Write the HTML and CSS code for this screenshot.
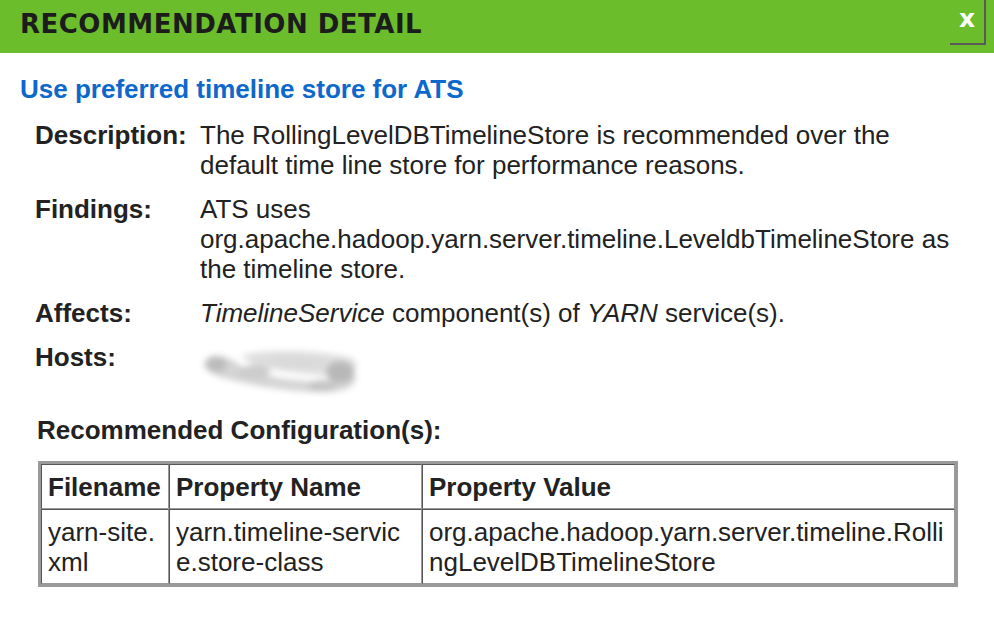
FILE: index.html
```html
<!DOCTYPE html>
<html lang="en">
<head>
<meta charset="utf-8">
<title>Recommendation Detail</title>
<link rel="stylesheet" href="styles.css">
</head>
<body>
<div class="dialog">
  <header class="dialog-header">
    <h1 class="dialog-title">RECOMMENDATION DETAIL</h1>
    <button class="close-btn" type="button" aria-label="Close">x</button>
  </header>
  <main class="dialog-body">
    <h2 class="rec-title">Use preferred timeline store for ATS</h2>
    <dl class="details">
      <dt>Description:</dt>
      <dd>The RollingLevelDBTimelineStore is recommended over the default time line store for performance reasons.</dd>
      <dt>Findings:</dt>
      <dd>ATS uses org.apache.hadoop.yarn.server.timeline.LeveldbTimelineStore as the timeline store.</dd>
      <dt>Affects:</dt>
      <dd><em>TimelineService</em> component(s) of <em>YARN</em> service(s).</dd>
      <dt>Hosts:</dt>
      <dd class="hosts">
        <svg class="blur-blob" width="170" height="56" viewBox="0 0 170 56" aria-hidden="true">
          <defs>
            <filter id="bl" x="-20%" y="-50%" width="140%" height="200%">
              <feGaussianBlur stdDeviation="3.2"/>
            </filter>
          </defs>
          <g filter="url(#bl)">
            <path d="M8 22 C14 12 30 12 42 22 C58 34 92 38 124 40 C142 42 152 38 158 30 C164 42 152 50 130 50 C100 50 70 46 44 40 C26 36 10 32 8 22 Z" fill="#d4d4d4"/>
            <path d="M45 14 C70 6 120 8 156 16 C164 22 160 32 150 34 C120 34 90 30 60 24 Z" fill="#dedede"/>
            <ellipse cx="20" cy="22" rx="11" ry="8" fill="#bcbcbc"/>
            <ellipse cx="144" cy="30" rx="14" ry="11" fill="#b8b8b8"/>
            <ellipse cx="126" cy="44" rx="14" ry="6" fill="#c4c4c4"/>
            <ellipse cx="58" cy="30" rx="16" ry="7" fill="#cccccc"/>
            <ellipse cx="100" cy="20" rx="30" ry="6" fill="#d9d9d9"/>
          </g>
        </svg>
      </dd>
    </dl>
    <h3 class="config-title">Recommended Configuration(s):</h3>
    <table class="config-table">
      <colgroup>
        <col class="c-file">
        <col class="c-name">
        <col class="c-value">
      </colgroup>
      <thead>
        <tr><th>Filename</th><th>Property Name</th><th>Property Value</th></tr>
      </thead>
      <tbody>
        <tr>
          <td>yarn-site.xml</td>
          <td>yarn.timeline-service.store-class</td>
          <td>org.apache.hadoop.yarn.server.timeline.RollingLevelDBTimelineStore</td>
        </tr>
      </tbody>
    </table>
  </main>
</div>
</body>
</html>
```

FILE: styles.css
```css
* { box-sizing: border-box; }

html, body {
  margin: 0;
  padding: 0;
  background: #ffffff;
}

body {
  font-family: "Liberation Sans", Arial, Helvetica, sans-serif;
  font-size: 26px;
  line-height: 30px;
  color: #222222;
}

.dialog-header {
  height: 53px;
  background: #6bbd2c;
  display: flex;
  justify-content: space-between;
  align-items: flex-start;
}

.dialog-title {
  margin: 0;
  padding: 9px 0 0 20px;
  font-family: "DejaVu Sans", Verdana, sans-serif;
  font-weight: bold;
  font-size: 26px;
  line-height: 30px;
  letter-spacing: 0.5px;
  color: #1c1c1c;
}

.close-btn {
  width: 36px;
  height: 45px;
  margin-right: 8px;
  padding: 0 0 6px 0;
  background: transparent;
  border: 0;
  border-right: 2px solid #5a5a5a;
  border-bottom: 2px solid #5a5a5a;
  color: #ffffff;
  font-family: "DejaVu Sans", Verdana, sans-serif;
  font-weight: bold;
  font-size: 25px;
  line-height: 30px;
  cursor: pointer;
}

.dialog-body {
  padding: 21px 0 0 0;
}

.rec-title {
  margin: 0 0 16px 20px;
  font-size: 26px;
  line-height: 30px;
  font-weight: bold;
  color: #0d68cc;
}

.details {
  margin: 0 34px 0 35px;
  display: grid;
  grid-template-columns: 165px 1fr;
  row-gap: 14px;
}

.details dt {
  font-weight: bold;
}

.details dd {
  margin: 0;
}

.hosts {
  height: 30px;
  position: relative;
}

.blur-blob {
  position: absolute;
  left: -4px;
  top: 0;
}

.config-title {
  margin: 43px 0 16px 37px;
  font-size: 26px;
  line-height: 30px;
  font-weight: bold;
}

.config-table {
  margin-left: 38px;
  width: 920px;
  table-layout: fixed;
  border-collapse: separate;
  border-spacing: 0;
  border: 3px solid #9a9a9a;
}

.c-file { width: 128px; }
.c-name { width: 253px; }
.c-value { width: 533px; }

.config-table th,
.config-table td {
  border: 1px solid;
  border-color: #555555 #9a9a9a #9a9a9a #555555;
  padding: 7px 9px 6px 6px;
  text-align: left;
  vertical-align: top;
  font-size: 26px;
  line-height: 30px;
}

.config-table th {
  font-weight: bold;
  white-space: nowrap;
  overflow: visible;
}

.config-table td {
  word-break: break-all;
}

.config-table th:first-child,
.config-table td:first-child {
  padding-right: 4px;
}
```
